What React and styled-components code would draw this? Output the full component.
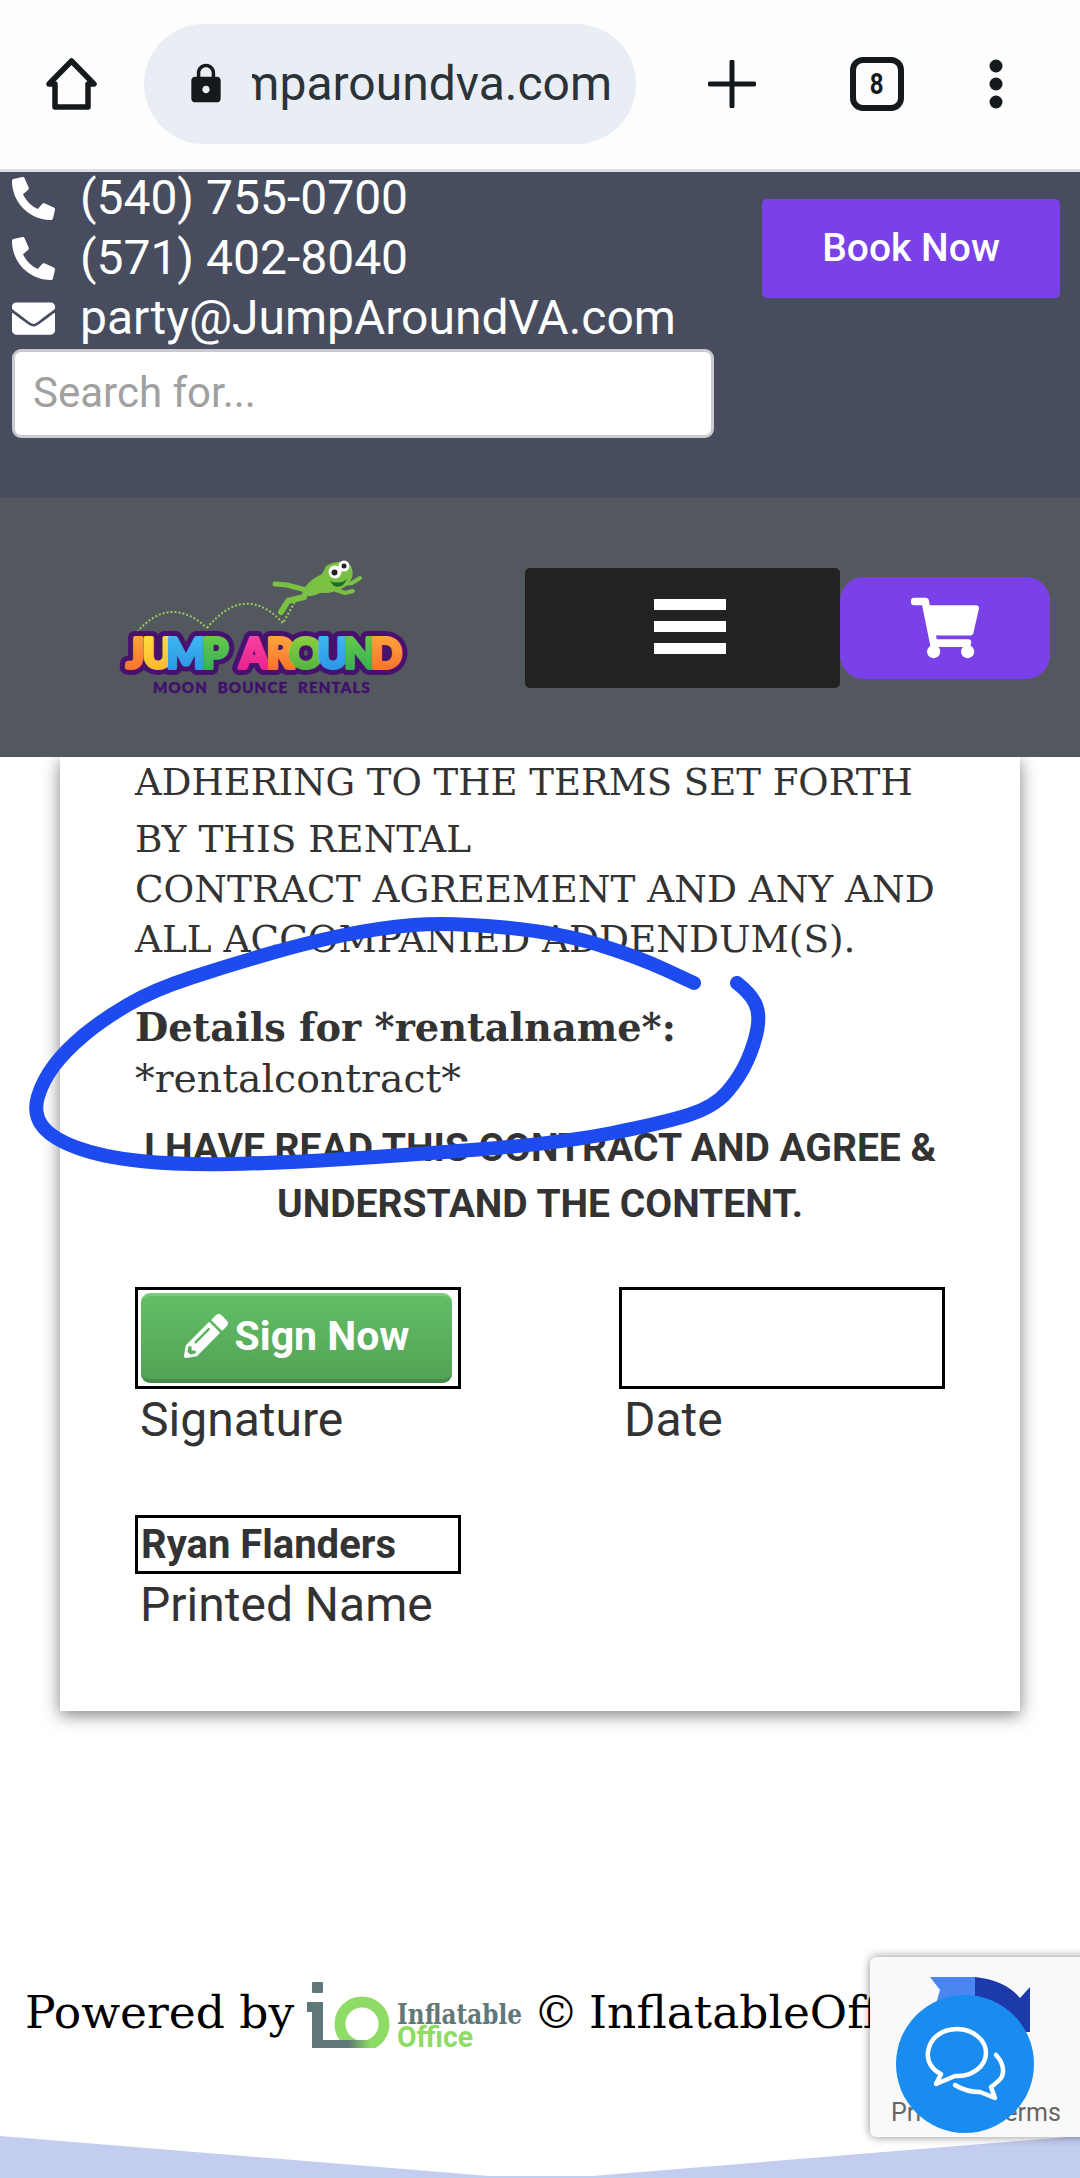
import React from "react";
import styled, { createGlobalStyle } from "styled-components";
import { FaPhone, FaEnvelope, FaShoppingCart, FaPencilAlt } from "react-icons/fa";
import { MdLock } from "react-icons/md";

const Global = createGlobalStyle`
  html, body { margin: 0; padding: 0; background: #fff; }
  * { box-sizing: border-box; }
`;

const Page = styled.div`
  position: relative;
  width: 1080px;
  height: 2178px;
  overflow: hidden;
  display: flex;
  flex-direction: column;
  font-family: Roboto, sans-serif;
  color: #333;
  background: #fff;
`;

const Chrome = styled.div`
  height: 172px;
  flex: none;
  display: flex;
  align-items: center;
  padding: 0 0 2px 45px;
  background: #fdfdfe;
  border-bottom: 3px solid #dde1e6;
`;
const HomeIcon = styled.svg`
  width: 53px;
  height: 54px;
  flex: none;
`;
const UrlPill = styled.div`
  width: 492px;
  height: 120px;
  margin-left: 46px;
  flex: none;
  border-radius: 60px;
  background: #e8eef3;
  display: flex;
  align-items: center;
  padding: 0 24px 0 40px;
  color: #1c2328;
  svg { flex: none; }
`;
const UrlClip = styled.div`
  margin-left: 24px;
  flex: 1;
  overflow: hidden;
  display: flex;
  justify-content: flex-end;
  font-size: 48px;
  white-space: nowrap;
  color: #2b3338;
`;
const PlusIcon = styled.svg`
  width: 48px;
  height: 48px;
  margin-left: 72px;
  flex: none;
`;
const TabCount = styled.div`
  width: 54px;
  height: 54px;
  margin-left: 94px;
  flex: none;
  border: 6px solid #14191c;
  border-radius: 13px;
  display: flex;
  align-items: center;
  justify-content: center;
  font: 700 30px/1 Roboto, sans-serif;
  color: #14191c;
  span { display: block; transform: scaleX(0.8); }
`;
const DotsIcon = styled.svg`
  width: 16px;
  height: 50px;
  margin-left: 84px;
  flex: none;
`;

const Header = styled.header`
  height: 326px;
  flex: none;
  background: #474d5e;
  padding: 0 20px 0 12px;
  display: flex;
  justify-content: space-between;
  align-items: flex-start;
`;
const ContactCol = styled.div`
  width: 702px;
  margin-top: -4px;
`;
const ContactLine = styled.div`
  height: 60px;
  display: flex;
  align-items: center;
  color: #fff;
  font-size: 48px;
  line-height: 60px;
  white-space: nowrap;
  svg { width: 43px; height: 43px; flex: none; margin-right: 25px; }
`;
const SearchBox = styled.div`
  height: 89px;
  margin-top: 1px;
  padding: 0 18px 2px;
  display: flex;
  align-items: center;
  background: #fff;
  border: 3px solid #c9cbd0;
  border-radius: 9px;
  font-size: 42px;
  color: #a0a0a0;
`;
const BookButton = styled.div`
  width: 298px;
  height: 99px;
  margin-top: 27px;
  padding-bottom: 2px;
  display: flex;
  align-items: center;
  justify-content: center;
  background: #7a41e8;
  border-radius: 5px;
  color: #fff;
  font-size: 39px;
  font-weight: 500;
`;

const Nav = styled.nav`
  height: 259px;
  flex: none;
  background: #53585f;
  display: flex;
  align-items: flex-start;
`;
const Logo = styled.svg`
  width: 360px;
  height: 180px;
  margin: 42px 0 0 80px;
  flex: none;
`;
const MenuButton = styled.div`
  width: 315px;
  height: 120px;
  margin: 70px 0 0 85px;
  padding: 0 0 4px 129px;
  flex: none;
  background: #222;
  border-radius: 5px;
  display: flex;
  flex-direction: column;
  justify-content: center;
  gap: 11px;
`;
const MenuBar = styled.span`
  display: block;
  width: 72px;
  height: 11px;
  background: #fff;
`;
const CartButton = styled.div`
  width: 210px;
  height: 102px;
  margin-top: 79px;
  flex: none;
  background: #7a41e8;
  border-radius: 24px;
  display: flex;
  align-items: center;
  justify-content: center;
  color: #fff;
  svg { width: 68px; height: 62px; }
`;

const Card = styled.main`
  width: 960px;
  height: 954px;
  margin-left: 60px;
  flex: none;
  padding: 1px 75px 0;
  background: #fff;
  box-shadow: 0 4px 16px rgba(0, 0, 0, 0.5);
  clip-path: inset(0 -30px -30px -30px);
`;
const SerifLine = styled.div`
  font-family: "DejaVu Serif", serif;
  font-size: ${(p) => p.$size || 37.4}px;
  line-height: 50px;
  height: 50px;
  white-space: nowrap;
  color: #333;
  margin-bottom: ${(p) => p.$after || 0}px;
  margin-top: ${(p) => p.$before || 0}px;
  font-weight: ${(p) => (p.$bold ? 700 : 400)};
`;
const Agreement = styled.div`
  margin: 17px -15px 0;
  text-align: center;
  font-size: 39px;
  font-weight: 700;
  line-height: 56px;
  color: #333;
`;
const SignRow = styled.div`
  display: flex;
  gap: 158px;
  margin-top: ${(p) => p.$top}px;
`;
const SignField = styled.div`
  width: 326px;
`;
const FieldBox = styled.div`
  height: ${(p) => p.$h}px;
  border: 3px solid #000;
  padding: 3px;
  display: flex;
  align-items: center;
`;
const SignButton = styled.div`
  width: 311px;
  height: 90px;
  padding-bottom: 3px;
  border-radius: 9px;
  background: linear-gradient(#62bf66, #53a255);
  border-top: 3px solid #78cc7c;
  border-bottom: 4px solid #47894a;
  display: flex;
  align-items: center;
  justify-content: center;
  gap: 7px;
  color: #fff;
  font-size: 41px;
  font-weight: 700;
  svg { width: 44px; height: 44px; }
`;
const NameValue = styled.div`
  font-size: 40px;
  font-weight: 700;
  color: #333;
`;
const FieldLabel = styled.div`
  padding-left: 5px;
  margin-top: 1px;
  font-size: 48px;
  line-height: 60px;
  color: #333;
`;

const Footer = styled.footer`
  height: 68px;
  margin-top: 269px;
  padding-left: 25px;
  flex: none;
  display: flex;
  align-items: center;
  gap: 11px;
  white-space: nowrap;
  overflow: hidden;
  font-family: "DejaVu Serif", serif;
  font-size: 45.500px;
  color: #000;
`;
const FooterText = styled.span`
  margin-top: -4px;
  word-spacing: ${(p) => p.$tight ? -4 : 0}px;
`;
const IoLogo = styled.svg`
  width: 217px;
  height: 68px;
  flex: none;
`;
const Wedge = styled.div`
  height: 42px;
  margin-top: 88px;
  flex: none;
  background: #c3cdf0;
  clip-path: polygon(0 0, 489px 40px, 592px 40px, 1080px 0, 1080px 100%, 0 100%);
`;

const Scribble = styled.svg`
  position: absolute;
  left: 0;
  top: 0;
  width: 1080px;
  height: 2178px;
  pointer-events: none;
`;
const Recaptcha = styled.div`
  position: absolute;
  left: 870px;
  top: 1957px;
  width: 256px;
  height: 180px;
  background: #f9f9f9;
  border-radius: 6px;
  box-shadow: 0 0 10px rgba(0, 0, 0, 0.45);
`;
const RecaptchaMark = styled.svg`
  position: absolute;
  left: 50px;
  top: 15px;
  width: 120px;
  height: 70px;
`;
const RecaptchaLinks = styled.div`
  position: absolute;
  left: 21px;
  top: 142px;
  font-size: 25px;
  line-height: 28px;
  color: #666;
  white-space: nowrap;
`;
const ChatBubble = styled.div`
  position: absolute;
  left: 896px;
  top: 1995px;
  width: 138px;
  height: 138px;
  border-radius: 50%;
  background: #1a8cf0;
  svg { display: block; width: 138px; height: 138px; }
`;

const letters = [
  ["J", 135, "a"], ["U", 158, "b"], ["M", 186, "c"], ["P", 215, "d"], ["A", 254, "e"],
  ["R", 280, "a"], ["O", 306, "f"], ["U", 333, "c"], ["N", 360, "d"], ["D", 386, "a"],
];
const grads = {
  a: ["#ffb13c", "#f9682c"],
  b: ["#ffe53c", "#ffb02e"],
  c: ["#3fc0f2", "#2c8fe4"],
  d: ["#6fd045", "#2fa958"],
  e: ["#ff49a6", "#e31d8a"],
  f: ["#9ad63c", "#47ae42"],
};

const inkPoints = [
  [694, 983], [638, 957], [561, 933], [449, 922], [378, 928], [306, 943], [230, 965], [153, 990],
  [102, 1020], [66, 1050], [43, 1080], [33, 1113], [51, 1138], [102, 1157], [179, 1165], [281, 1163],
  [408, 1155], [561, 1143], [663, 1123], [714, 1107], [740, 1077], [755, 1043], [760, 1013], [750, 993], [737, 983],
];
const inkPath = inkPoints.reduce((d, [x, y], i) => {
  if (i === 0) return `M${x} ${y}`;
  const [px, py] = inkPoints[i - 1];
  if (i === inkPoints.length - 1) return `${d} Q${px} ${py} ${x} ${y}`;
  return `${d} Q${px} ${py} ${(px + x) / 2} ${(py + y) / 2}`;
}, "");

export default function App() {
  return (
    <Page>
      <Global />
      <Chrome>
        <HomeIcon viewBox="0 0 53 54">
          <path d="M4 27 L26.500 4 L49 27 H43 V50 H10 V27 Z" fill="none" stroke="#14191c" strokeWidth="5.500" strokeLinejoin="round" />
        </HomeIcon>
        <UrlPill>
          <MdLock size={44} color="#14191c" />
          <UrlClip>jumparoundva.com</UrlClip>
        </UrlPill>
        <PlusIcon viewBox="0 0 48 48">
          <path d="M24 2 V46 M2 24 H46" stroke="#14191c" strokeWidth="5" strokeLinecap="round" />
        </PlusIcon>
        <TabCount><span>8</span></TabCount>
        <DotsIcon viewBox="0 0 16 50">
          <circle cx="8" cy="7" r="6.500" fill="#14191c" />
          <circle cx="8" cy="25" r="6.500" fill="#14191c" />
          <circle cx="8" cy="43" r="6.500" fill="#14191c" />
        </DotsIcon>
      </Chrome>

      <Header>
        <ContactCol>
          <ContactLine><FaPhone style={{ transform: "scaleX(-1)" }} />(540) 755-0700</ContactLine>
          <ContactLine><FaPhone style={{ transform: "scaleX(-1)" }} />(571) 402-8040</ContactLine>
          <ContactLine><FaEnvelope />party@JumpAroundVA.com</ContactLine>
          <SearchBox>Search for...</SearchBox>
        </ContactCol>
        <BookButton>Book Now</BookButton>
      </Header>

      <Nav>
        <Logo viewBox="80 540 360 180">
          <defs>
            {Object.entries(grads).map(([k, [t, b]]) => (
              <linearGradient key={k} id={`g${k}`} x1="0" y1="0" x2="0" y2="1">
                <stop offset="0" stopColor={t} />
                <stop offset="1" stopColor={b} />
              </linearGradient>
            ))}
          </defs>
          <path d="M137 632 Q170 594 207 628 M207 628 Q245 582 283 623 L297 598" fill="none" stroke="#9ccb5a" strokeWidth="2" strokeDasharray="2 2" />
          <g fill="none" stroke="#7ac143" strokeWidth="5" strokeLinecap="round" strokeLinejoin="round">
            <path d="M306 590 L287 585 L275 584" />
            <path d="M304 597 L288 601 L281 612" strokeWidth="6" />
            <path d="M336 590 L345 593 L353 591" strokeWidth="4" />
            <path d="M343 584 L352 583 L360 578" strokeWidth="4" />
          </g>
          <path d="M302 594 Q305 582 322 574 L326 566 Q340 558 351 566 Q356 577 346 586 Q335 594 320 593 Q310 599 302 594 Z" fill="#7ac143" />
          <circle cx="335" cy="572" r="6.500" fill="#fff" />
          <circle cx="344" cy="566" r="5.500" fill="#fff" />
          <circle cx="334.500" cy="572.500" r="3" fill="#222" />
          <circle cx="344" cy="566" r="2.500" fill="#222" />
          <path d="M330 581 Q340 585 347 579 Q343 589 334 586 Z" fill="#1d6b2a" />
          <g fontFamily="Lato, sans-serif" fontWeight="900" fontSize="41" textAnchor="middle" strokeLinejoin="round">
            {letters.map(([c, x], i) => (
              <text key={i} x={x} y="668" fill="none" stroke="#46126e" strokeWidth="14">{c}</text>
            ))}
            {letters.map(([c, x, g], i) => (
              <text key={i} x={x} y="668" fill={`url(#g${g})`} stroke={`url(#g${g})`} strokeWidth="4">{c}</text>
            ))}
          </g>
          <text x="262" y="693" textAnchor="middle" fontFamily="Lato, sans-serif" fontWeight="900" fontSize="15" stroke="#40106a" strokeWidth="0.500" fill="#40106a" letterSpacing="1.200" style={{ wordSpacing: "5px" }}>MOON BOUNCE RENTALS</text>
        </Logo>
        <MenuButton>
          <MenuBar />
          <MenuBar />
          <MenuBar />
        </MenuButton>
        <CartButton><FaShoppingCart /></CartButton>
      </Nav>

      <Card>
        <SerifLine $after={6} $size={37}>ADHERING TO THE TERMS SET FORTH</SerifLine>
        <SerifLine>BY THIS RENTAL</SerifLine>
        <SerifLine>CONTRACT AGREEMENT AND ANY AND</SerifLine>
        <SerifLine>ALL ACCOMPANIED ADDENDUM(S).</SerifLine>
        <SerifLine $before={39} $bold $size={38.3}>Details for *rentalname*:</SerifLine>
        <SerifLine $size={39.4}>*rentalcontract*</SerifLine>
        <Agreement>
          I HAVE READ THIS CONTRACT AND AGREE &amp;<br />UNDERSTAND THE CONTENT.
        </Agreement>
        <SignRow $top={55}>
          <SignField>
            <FieldBox $h={102}>
              <SignButton><FaPencilAlt />Sign Now</SignButton>
            </FieldBox>
            <FieldLabel>Signature</FieldLabel>
          </SignField>
          <SignField>
            <FieldBox $h={102} />
            <FieldLabel>Date</FieldLabel>
          </SignField>
        </SignRow>
        <SignRow $top={65}>
          <SignField>
            <FieldBox $h={59}><NameValue>Ryan Flanders</NameValue></FieldBox>
            <FieldLabel>Printed Name</FieldLabel>
          </SignField>
        </SignRow>
      </Card>

      <Footer>
        <FooterText>Powered by</FooterText>
        <IoLogo viewBox="305 1980 217 68">
          <defs>
            <linearGradient id="ioBar" x1="0" y1="0" x2="1" y2="0">
              <stop offset="0.300" stopColor="#607878" />
              <stop offset="1" stopColor="#8edb66" />
            </linearGradient>
          </defs>
          <circle cx="362" cy="2024" r="22" fill="none" stroke="#8edb66" strokeWidth="11" />
          <rect x="312" y="1982" width="11" height="11" rx="1" fill="#607878" />
          <path d="M307 2002 H323 V2040 H340 V2048 H312 V2012 H307 Z" fill="#607878" />
          <rect x="340" y="2040" width="30" height="8" fill="url(#ioBar)" />
          <text x="397" y="2024" fontFamily="'DejaVu Serif', serif" fontWeight="700" fontSize="27" fill="#607878" textLength="125" lengthAdjust="spacingAndGlyphs">Inflatable</text>
          <text x="397" y="2047" fontFamily="Roboto, sans-serif" fontWeight="700" fontSize="29" fill="#8edb66" textLength="76" lengthAdjust="spacingAndGlyphs">Office</text>
        </IoLogo>
        <FooterText $tight>© InflatableOffice.com</FooterText>
      </Footer>
      <Wedge />

      <Scribble viewBox="0 0 1080 2178">
        <path d={inkPath} fill="none" stroke="#1e4bf0" strokeWidth="14" strokeLinecap="round" strokeLinejoin="round" />
      </Scribble>

      <Recaptcha>
        <RecaptchaMark viewBox="0 0 120 70">
          <path d="M10 5 H55 V60 H8 L20 18 Z" fill="#4a86f0" />
          <path d="M55 5 Q85 8 100 26 L110 15 V60 H55 Z" fill="#1c3aa9" />
        </RecaptchaMark>
        <RecaptchaLinks>Privacy - Terms</RecaptchaLinks>
      </Recaptcha>
      <ChatBubble>
        <svg viewBox="-69 -69 138 138" fill="none" stroke="#fff" strokeWidth="4.500" strokeLinecap="round" strokeLinejoin="round">
          <path d="M-29 20 L-24 10 C-36 4 -38 -6 -37 -12 C-35 -27 -22 -35 -8 -35 C8 -35 21 -24 21 -11 C21 3 6 13 -10 12 Z" />
          <path d="M31 -9 C38 -2 40 8 36 14 C33 18 30 20 26 23 L30 34 L15 28 C8 28 -2 26 -10 21" />
        </svg>
      </ChatBubble>
    </Page>
  );
}
